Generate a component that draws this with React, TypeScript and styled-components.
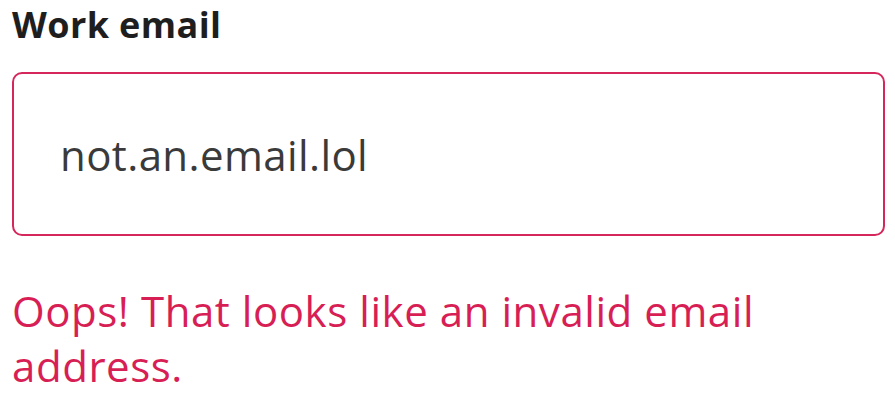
import React from 'react';
import styled, { createGlobalStyle } from 'styled-components';

const GlobalStyle = createGlobalStyle`
  body {
    margin: 0;
    background: #ffffff;
    font-family: "Open Sans", "Noto Sans", sans-serif;
  }
`;

const Field = styled.div`
  width: 873px;
  padding: 0 0 0 12px;
  display: flex;
  flex-direction: column;
`;

const Label = styled.label`
  color: #1e1e1e;
  font-size: 36px;
  font-weight: 700;
  letter-spacing: 0.4px;
  line-height: 49px;
  margin-bottom: 23px;
`;

const Input = styled.input<{ invalid?: boolean }>`
  box-sizing: border-box;
  height: 164px;
  width: 100%;
  padding: 0 46px;
  border: 2px solid ${p => (p.invalid ? '#d6275c' : '#cccccc')};
  border-radius: 10px;
  font-family: inherit;
  font-size: 42px;
  letter-spacing: 0.4px;
  color: #3a3a3a;
  outline: none;
`;

const ErrorText = styled.p`
  margin: 47px 0 0;
  color: #d81f55;
  font-size: 42px;
  letter-spacing: 0.55px;
  line-height: 55px;
  max-width: 800px;
`;

export default function App() {
  return (
    <>
      <GlobalStyle />
      <Field>
        <Label htmlFor="work-email">Work email</Label>
        <Input id="work-email" invalid defaultValue="not.an.email.lol" />
        <ErrorText>Oops! That looks like an invalid email address.</ErrorText>
      </Field>
    </>
  );
}
